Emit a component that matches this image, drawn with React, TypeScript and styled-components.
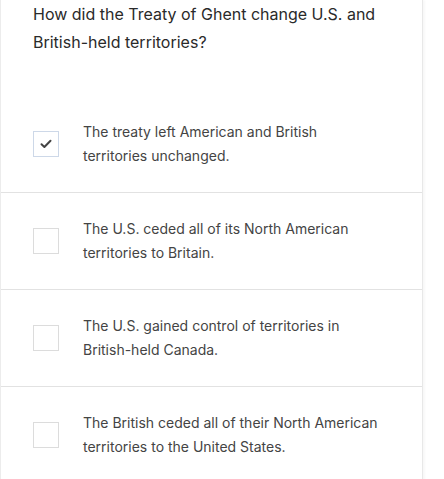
import styled, { createGlobalStyle } from 'styled-components';

const GlobalStyle = createGlobalStyle`
  body {
    margin: 0;
    background: #ffffff;
    font-family: Inter, 'Noto Sans', sans-serif;
  }
`;

const options = [
  {
    id: 'a',
    text: 'The treaty left American and British territories unchanged.',
    checked: true,
  },
  {
    id: 'b',
    text: 'The U.S. ceded all of its North American territories to Britain.',
    checked: false,
  },
  {
    id: 'c',
    text: 'The U.S. gained control of territories in British-held Canada.',
    checked: false,
  },
  {
    id: 'd',
    text: 'The British ceded all of their North American territories to the United States.',
    checked: false,
  },
];

function App() {
  return (
    <>
      <GlobalStyle />
      <Card>
        <Question>
          How did the Treaty of Ghent change U.S. and British-held territories?
        </Question>
        <List>
          {options.map((item) => (
            <Row key={item.id}>
              <Box checked={item.checked}>
                {item.checked ? (
                  <svg width="12" height="10" viewBox="0 0 12 10">
                    <path
                      d="M1.5 5.2 L4.4 8 L10.5 1.8"
                      fill="none"
                      stroke="#444"
                      strokeWidth="2"
                      strokeLinecap="round"
                      strokeLinejoin="round"
                    />
                  </svg>
                ) : null}
              </Box>
              <Label>{item.text}</Label>
            </Row>
          ))}
        </List>
      </Card>
    </>
  );
}

export default App;

const Card = styled.div`
  width: 421px;
  border-left: 1px solid #ececec;
  border-right: 1px solid #e8e8e8;
  box-shadow: 2px 0 2px rgba(0, 0, 0, 0.03);
  min-height: 479px;
  background: #fff;
`;

const Question = styled.div`
  padding: 0 40px 39px 32px;
  font-size: 16px;
  line-height: 28px;
  font-weight: 400;
  color: #2a2a2a;
  letter-spacing: 0;
`;

const List = styled.div`
  display: flex;
  flex-direction: column;
`;

const Row = styled.div`
  display: flex;
  align-items: center;
  height: 96px;
  padding: 0 32px;
  border-bottom: 1px solid #e2e2e2;
  &:first-child {
    margin-top: 1px;
  }
`;

const Box = styled.div<{ checked: boolean }>`
  flex: 0 0 auto;
  box-sizing: border-box;
  width: 26px;
  height: 26px;
  margin-right: 24px;
  border: 1px solid ${(p) => (p.checked ? '#cdd8e8' : '#dcdcdc')};
  display: flex;
  justify-content: center;
  align-items: center;
`;

const Label = styled.div`
  font-size: 14px;
  line-height: 24px;
  color: #444;
  max-width: 298px;
  letter-spacing: 0;
`;
